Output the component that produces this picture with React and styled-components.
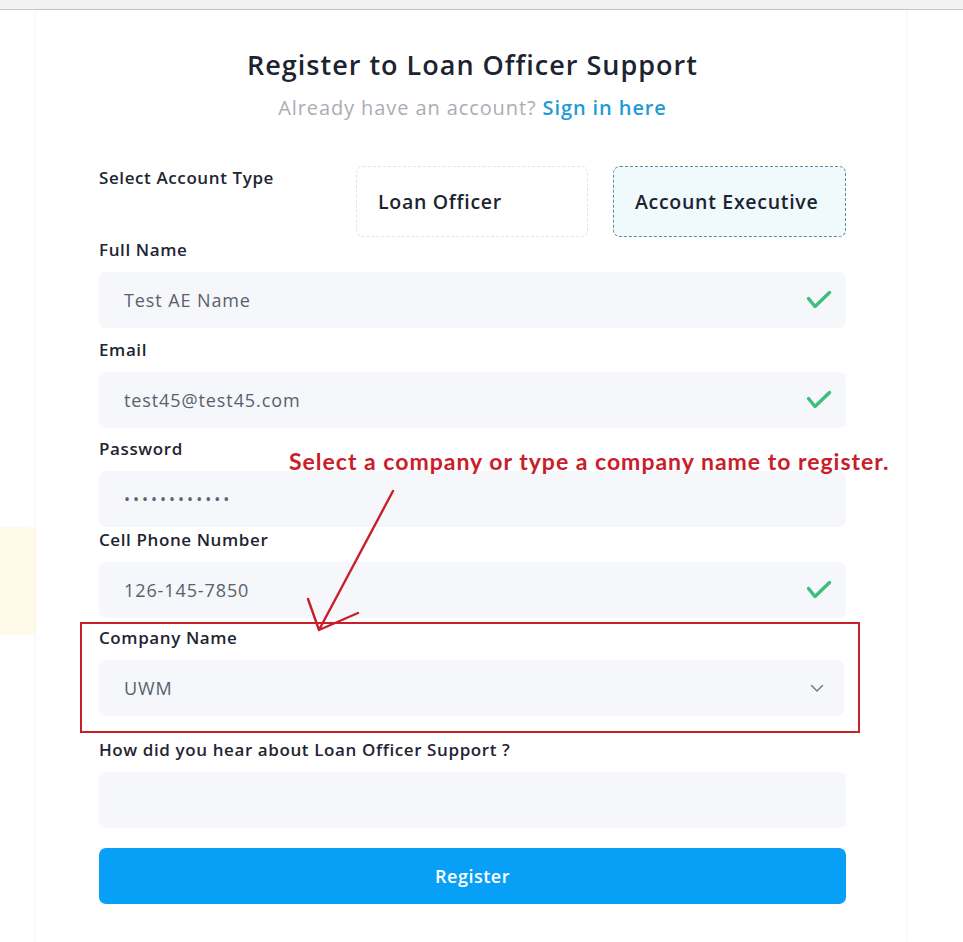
import styled, { createGlobalStyle } from "styled-components";

const GlobalStyle = createGlobalStyle`
  body {
    margin: 0;
    background: #fff;
    font-family: "Open Sans", "Noto Sans", sans-serif;
  }
  * { box-sizing: border-box; }
`;

const CheckIcon = () => (
  <svg width="26" height="20" viewBox="0 0 26 20" fill="none">
    <path
      d="M2.5 8.5 L9 16.5 L23.5 2.5"
      stroke="#3dbe7e"
      strokeWidth="3.4"
      strokeLinecap="round"
      strokeLinejoin="round"
    />
  </svg>
);

const Chevron = () => (
  <svg width="14" height="9" viewBox="0 0 14 9" fill="none">
    <path d="M1.5 1.5 L7 7 L12.5 1.5" stroke="#6b7280" strokeWidth="1.4" strokeLinecap="round" strokeLinejoin="round" />
  </svg>
);

const fields = [
  { label: "Full Name", value: "Test AE Name", ok: true, gap: 11 },
  { label: "Email", value: "test45@test45.com", ok: true, gap: 10 },
  { label: "Password", value: "............", type: "password", gap: 2 },
  { label: "Cell Phone Number", value: "126-145-7850", ok: true, gap: 9 },
];

const Register = () => {
  return (
    <Page>
      <GlobalStyle />
      <TopStrip />
      <Glow />
      <Card>
        <Title>Register to Loan Officer Support</Title>
        <Subtitle>
          Already have an account? <a href="#signin">Sign in here</a>
        </Subtitle>

        <AccountRow>
          <Label>Select Account Type</Label>
          <TypeBox>Loan Officer</TypeBox>
          <TypeBox $active>Account Executive</TypeBox>
        </AccountRow>

        {fields.map((f) => (
          <Field key={f.label} $gap={f.gap}>
            <Label>{f.label}</Label>
            <InputWrap>
              <Input type={f.type || "text"} defaultValue={f.value} readOnly />
              {f.ok ? <CheckIcon /> : null}
            </InputWrap>
          </Field>
        ))}

        <Field $gap={23} $marked>
          <Label>Company Name</Label>
          <InputWrap $narrow>
            <Input defaultValue="UWM" readOnly />
            <Chevron />
          </InputWrap>
        </Field>

        <Field $gap={20}>
          <Label>How did you hear about Loan Officer Support ?</Label>
          <InputWrap>
            <Input defaultValue="" readOnly />
          </InputWrap>
        </Field>

        <SubmitButton>Register</SubmitButton>

        <Note>Select a company or type a company name to register.</Note>
        <Arrow width="100" height="150" viewBox="0 0 100 150">
          <path
            d="M87 2 L13 141 M13 141 L2 110 M13 141 L52 124"
            stroke="#c8202a"
            strokeWidth="2.4"
            fill="none"
            strokeLinecap="round"
          />
        </Arrow>
      </Card>
    </Page>
  );
};

const Page = styled.div`
  position: relative;
  min-height: 942px;
  overflow: hidden;
`;

const TopStrip = styled.div`
  height: 10px;
  background: #f2f2f2;
  border-bottom: 1px solid #c9c9c9;
`;

const Glow = styled.div`
  position: absolute;
  left: -40px;
  top: 527px;
  width: 80px;
  height: 108px;
  border-radius: 12px;
  background: #fffaea;
`;

const Card = styled.div`
  position: relative;
  z-index: 1;
  margin-left: 36px;
  width: 870px;
  min-height: 932px;
  background: #fff;
  box-shadow: 0 0 4px rgba(0, 0, 0, 0.06);
  padding: 37px 60px 0 63px;
`;

const Title = styled.h1`
  margin: 0;
  text-align: center;
  font-size: 27px;
  line-height: 36px;
  font-weight: 600;
  letter-spacing: 1px;
  color: #1c2331;
`;

const Subtitle = styled.p`
  margin: 10px 0 0;
  text-align: center;
  font-size: 20px;
  line-height: 30px;
  letter-spacing: 0.9px;
  color: #a9adb5;
  a {
    color: #1e9bd7;
    font-weight: 600;
    text-decoration: none;
  }
`;

const AccountRow = styled.div`
  margin-top: 43px;
  display: grid;
  grid-template-columns: 232px 232px 233px;
  column-gap: 25px;
  align-items: start;
  margin-bottom: 2px;
  > span {
    padding-top: 1px;
  }
`;

const Label = styled.span`
  display: block;
  font-size: 17px;
  line-height: 22px;
  font-weight: 600;
  letter-spacing: 0.6px;
  color: #1f2533;
`;

const TypeBox = styled.div`
  height: 71px;
  display: flex;
  align-items: center;
  padding-left: 21px;
  border-radius: 7px;
  font-size: 19.5px;
  font-weight: 600;
  letter-spacing: 0.7px;
  color: #1c2331;
  border: 1px dashed ${(p) => (p.$active ? "#5f8b9c" : "#e3e5e8")};
  background: ${(p) => (p.$active ? "#f0f9fc" : "#fff")};
`;

const Field = styled.div`
  position: relative;
  margin-bottom: ${(p) => p.$gap}px;
  ${(p) =>
    p.$marked &&
    `
    &::before {
      content: "";
      position: absolute;
      inset: -5px -14px -17px -19px;
      border: 2px solid #c8202a;
      pointer-events: none;
    }
  `}
`;

const InputWrap = styled.div`
  margin-top: 11px;
  height: 56px;
  width: ${(p) => (p.$narrow ? "745px" : "100%")};
  display: flex;
  align-items: center;
  padding: 0 ${(p) => (p.$narrow ? "20px" : "14px")} 0 25px;
  background: #f5f7fa;
  border-radius: 7px;
  svg {
    flex-shrink: 0;
  }
`;

const Input = styled.input`
  flex: 1;
  min-width: 0;
  border: none;
  outline: none;
  background: transparent;
  font-family: inherit;
  font-size: 18px;
  letter-spacing: 0.9px;
  color: #5a606c;
  padding: 0;
  &[type="password"] {
    font-size: 16px;
    letter-spacing: 3px;
  }
`;

const SubmitButton = styled.button`
  display: block;
  width: 100%;
  height: 56px;
  border: none;
  border-radius: 7px;
  background: #08a0f6;
  color: #fff;
  font-family: inherit;
  font-size: 18px;
  font-weight: 600;
  letter-spacing: 0.5px;
  cursor: pointer;
`;

const Note = styled.div`
  position: absolute;
  left: 253px;
  top: 437px;
  font-family: Lato, "Open Sans", sans-serif;
  font-weight: 700;
  font-size: 23px;
  line-height: 28px;
  letter-spacing: 1px;
  color: #c8202a;
  white-space: nowrap;
`;

const Arrow = styled.svg`
  position: absolute;
  left: 270px;
  top: 479px;
`;

export default Register;
